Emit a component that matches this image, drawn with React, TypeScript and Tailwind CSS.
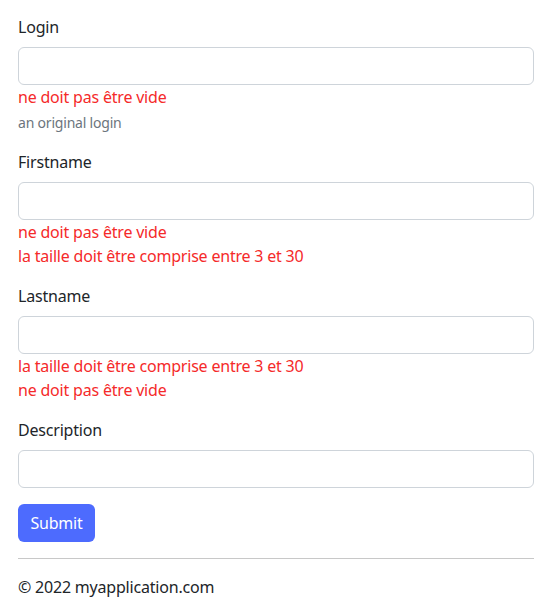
import React from "react";

function Field({ label, errors, help }: { label: string; errors: string[]; help?: string }) {
  return (
    <div className="mb-4">
      <label className="block mb-2 text-[16px] leading-6 text-[#212529]">{label}</label>
      <input
        type="text"
        className="block w-full h-[38px] rounded-[6px] border border-[#ced4da] bg-white px-3 outline-none"
      />
      {errors.map((e, i) => (
        <div key={i} className="text-[16px] leading-6 text-[#f52a2a]">
          {e}
        </div>
      ))}
      {help && <div className="mt-1 text-[14px] leading-[20px] text-[#6c757d]">{help}</div>}
    </div>
  );
}

export default function App() {
  return (
    <div
      className="bg-white w-[551px] min-h-[604px] pl-[18px] pr-[17px] pt-[15px] text-[#212529] tracking-[-0.2px]"
      style={{ fontFamily: '"Noto Sans", sans-serif' }}
    >
      <Field label="Login" errors={["ne doit pas être vide"]} help="an original login" />
      <div className="h-px" />
      <Field
        label="Firstname"
        errors={["ne doit pas être vide", "la taille doit être comprise entre 3 et 30"]}
      />
      <Field
        label="Lastname"
        errors={["la taille doit être comprise entre 3 et 30", "ne doit pas être vide"]}
      />
      <Field label="Description" errors={[]} />
      <button className="h-[38px] w-[77px] rounded-[6px] bg-[#4d6bfe] text-white text-[16px] leading-6">
        Submit
      </button>
      <hr className="my-4 border-0 border-t border-[#c8c8c8]" />
      <div className="text-[16px] leading-6">© 2022 myapplication.com</div>
    </div>
  );
}
